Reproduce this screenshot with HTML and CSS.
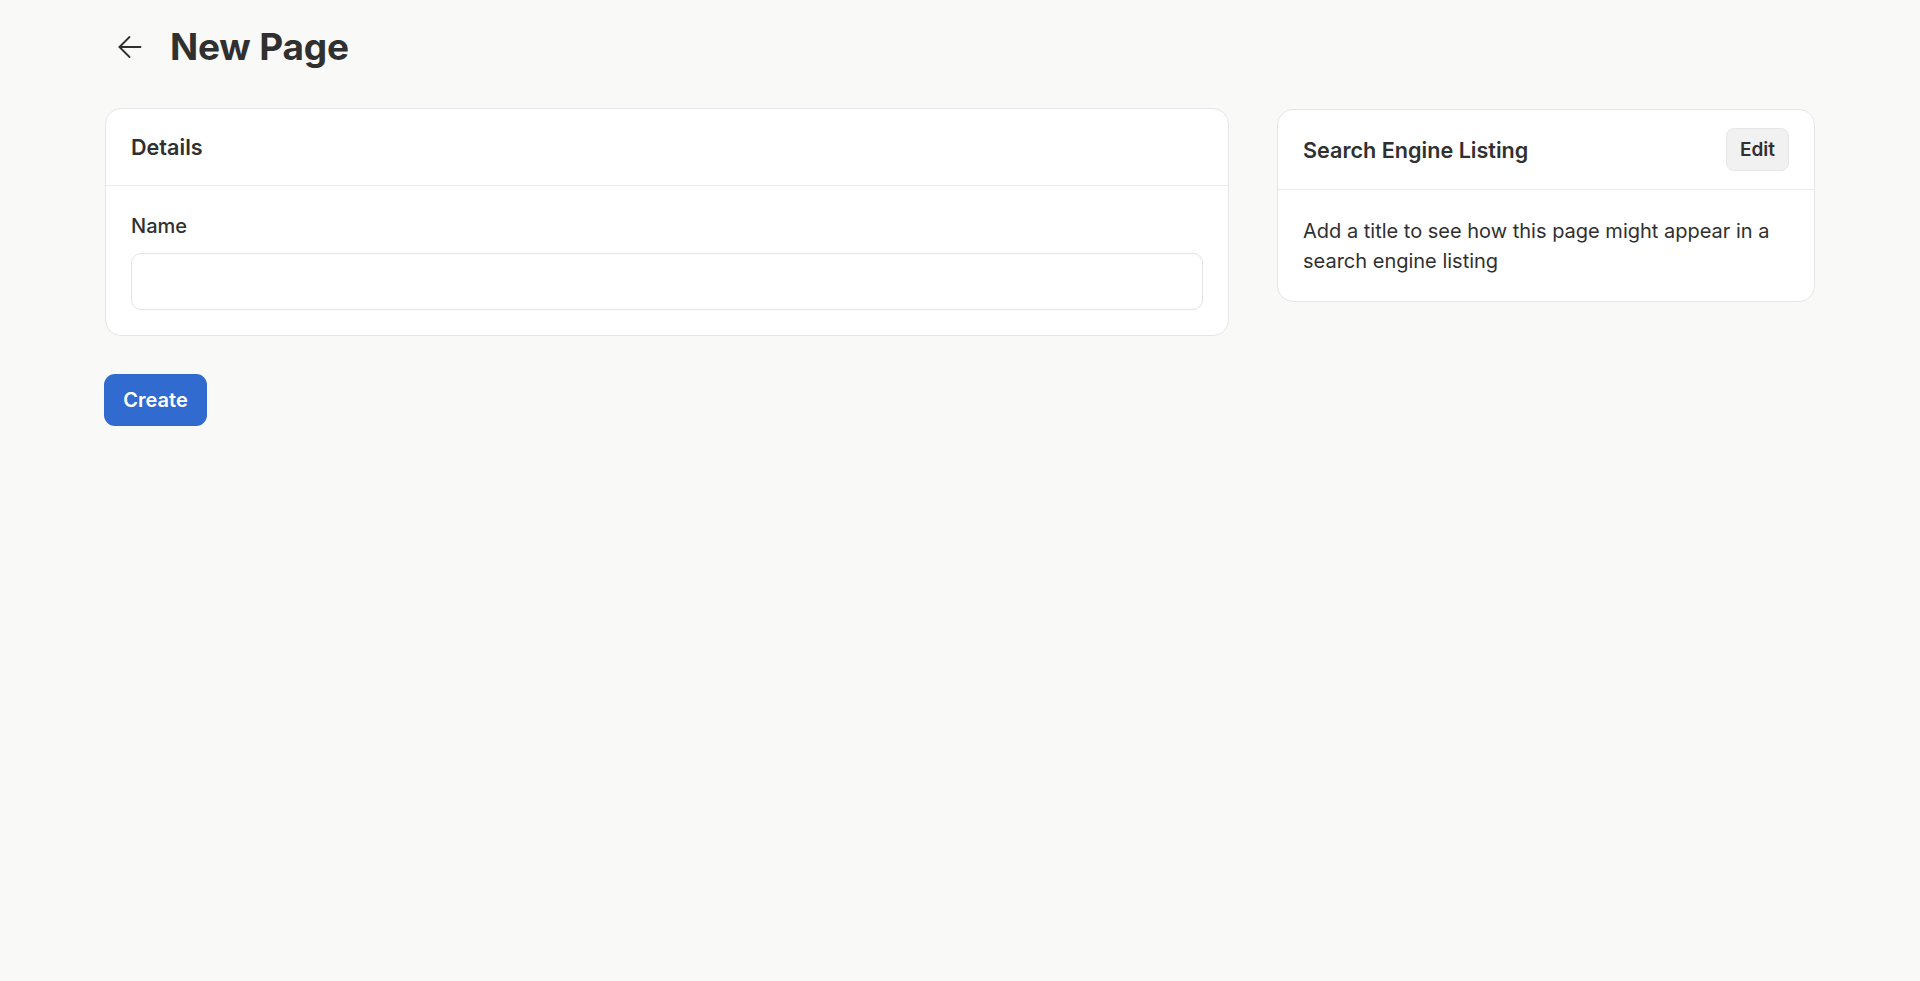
FILE: index.html
```html
<!DOCTYPE html>
<html lang="en">
<head>
<meta charset="utf-8">
<title>New Page</title>
<link rel="stylesheet" href="styles.css">
</head>
<body>
<div class="page">
  <header class="page-header">
    <button class="back" aria-label="Back">
      <svg width="24" height="24" viewBox="0 0 24 24" fill="none" stroke="#303030" stroke-width="1.8" stroke-linecap="round" stroke-linejoin="round"><path d="M22.5 12H1.5"/><path d="M11.5 2 1.5 12l10 10"/></svg>
    </button>
    <h1 class="title">New Page</h1>
  </header>
  <div class="layout">
    <div class="main-col">
      <section class="card">
        <div class="card-head"><h2 class="card-title">Details</h2></div>
        <div class="card-body">
          <label class="label" for="name">Name</label>
          <input class="input" id="name" type="text">
        </div>
      </section>
      <div class="actions"><button class="btn-primary">Create</button></div>
    </div>
    <aside class="side-col">
      <section class="card">
        <div class="card-head card-head-row">
          <h2 class="card-title">Search Engine Listing</h2>
          <button class="btn-secondary">Edit</button>
        </div>
        <div class="card-body">
          <p class="muted">Add a title to see how this page might appear in a search engine listing</p>
        </div>
      </section>
    </aside>
  </div>
</div>
</body>
</html>
```
FILE: styles.css
```css
* { box-sizing: border-box; }
html, body { margin: 0; padding: 0; }
body {
  background: #f9f9f8;
  color: #303030;
  font-family: Inter, "Noto Sans", sans-serif;
}
.page {
  padding: 25px 105px 0 105px;
}
.page-header {
  display: flex;
  align-items: center;
  height: 44px;
  padding-left: 13px;
  gap: 28px;
}
.back {
  border: 0;
  background: none;
  padding: 0;
  width: 24px;
  height: 24px;
  display: flex;
  cursor: pointer;
}
.title {
  margin: 0;
  font-size: 37px;
  line-height: 44px;
  font-weight: 700;
  letter-spacing: -0.2px;
}
.layout {
  display: flex;
  gap: 48px;
  margin-top: 39px;
  align-items: flex-start;
}
.main-col { width: 1124px; flex: 0 0 1124px; }
.side-col { flex: 1 1 auto; min-width: 0; margin-top: 1px; }
.card {
  background: #fff;
  border: 1px solid #e6e6e6;
  border-radius: 16px;
}
.card-head {
  height: 77px;
  padding: 0 25px;
  display: flex;
  align-items: center;
  border-bottom: 1px solid #ededed;
}
.card-head-row {
  height: 80px;
  justify-content: space-between;
  padding-right: 25px;
}
.card-title {
  margin: 0;
  font-size: 21.6px;
  font-weight: 600;
  line-height: 28px;
}
.card-body {
  padding: 26px 25px 25px;
}
.label {
  display: block;
  font-size: 20px;
  font-weight: 500;
  line-height: 28px;
  margin-bottom: 13px;
}
.input {
  display: block;
  width: 100%;
  height: 57px;
  border: 1px solid #e3e3e3;
  border-radius: 10px;
  background: #fff;
  font: inherit;
  font-size: 20px;
  padding: 0 16px;
}
.muted {
  margin: 0;
  font-size: 20px;
  line-height: 30px;
}
.btn-secondary {
  border: 1px solid #e6e6e6;
  background: #f1f1f1;
  border-radius: 8px;
  height: 43px;
  padding: 0 13px;
  font-family: inherit;
  font-size: 19px;
  font-weight: 600;
  color: #303030;
}
.actions { margin-top: 38px; }
.btn-primary {
  border: 0;
  background: #316bcf;
  color: #fff;
  border-radius: 11px;
  height: 52px;
  width: 103px;
  font-family: inherit;
  font-size: 20px;
  font-weight: 600;
  margin-left: -1px;
}
```
